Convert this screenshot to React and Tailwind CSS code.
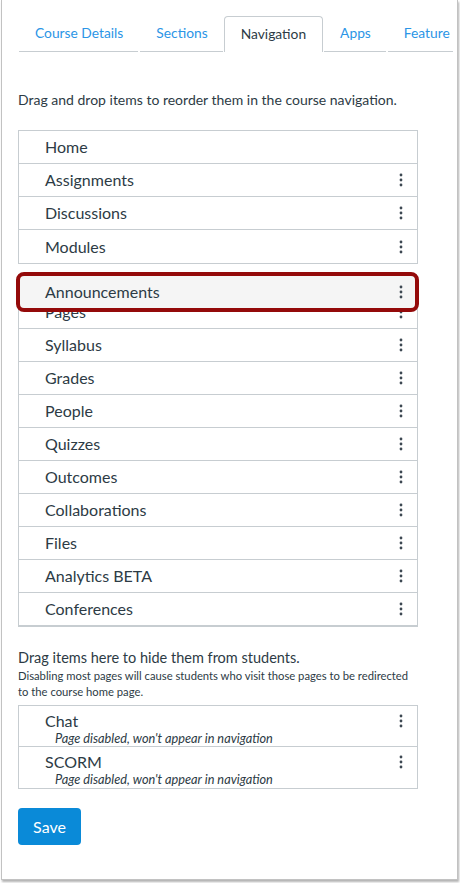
import React from "react";

const tabs = ["Course Details", "Sections", "Navigation", "Apps", "Feature"];

const enabledTop = ["Home", "Assignments", "Discussions", "Modules"];
const enabledRest = [
  "Pages",
  "Syllabus",
  "Grades",
  "People",
  "Quizzes",
  "Outcomes",
  "Collaborations",
  "Files",
  "Analytics BETA",
  "Conferences",
];
const hidden = ["Chat", "SCORM"];

function Kebab() {
  return (
    <svg width="6" height="16" viewBox="0 0 6 16" className="shrink-0">
      <circle cx="3" cy="3" r="1.4" fill="#3d4852" />
      <circle cx="3" cy="8" r="1.4" fill="#3d4852" />
      <circle cx="3" cy="13" r="1.4" fill="#3d4852" />
    </svg>
  );
}

function Row({ label, menu = true }) {
  return (
    <div className="flex items-center justify-between h-[33px] border-b border-[#c7cdd1] last:border-b-0 pl-[26px] pr-[13px]">
      <span className="text-[16px] text-[#2d3b45]">{label}</span>
      {menu && <Kebab />}
    </div>
  );
}

export default function App() {
  return (
    <div className="w-[460px] h-[883px] bg-white" style={{ fontFamily: "Lato, 'Open Sans', sans-serif" }}>
      <div className="ml-[1px] w-[457px] h-[880px] border-x border-b border-[#c2c2c2] shadow-[1px_2px_2px_rgba(0,0,0,0.3)] pl-[16px] pt-[16px]">
        {/* tabs */}
        <div className="flex w-[435px] overflow-hidden">
          {tabs.map((t) =>
            t === "Navigation" ? (
              <div
                key={t}
                className="shrink-0 h-[36px] px-4 flex items-center border border-b-0 border-[#c7cdd1] rounded-t-[4px] text-[13.8px] text-[#2d3b45] bg-white"
              >
                {t}
              </div>
            ) : (
              <div
                key={t}
                className="shrink-0 h-[36px] pl-4 pr-[15px] mx-[1px] flex items-center border-b border-[#c7cdd1] text-[13.8px] text-[#2b95e6] whitespace-nowrap"
              >
                {t}
              </div>
            )
          )}
          <div className="flex-1 border-b border-[#c7cdd1]" />
        </div>

        <p className="mt-[38px] text-[14px] leading-[20px] text-[#2d3b45]">
          Drag and drop items to reorder them in the course navigation.
        </p>

        <div className="mt-[20px] w-[400px] border border-[#c7cdd1]">
          {enabledTop.map((l) => (
            <Row key={l} label={l} menu={l !== "Home"} />
          ))}
        </div>

        <div className="relative mt-[31px] w-[400px] border border-[#c7cdd1]">
          {enabledRest.map((l) => (
            <Row key={l} label={l} />
          ))}
          {/* item being dragged */}
          <div className="absolute left-[-3px] top-[-24px] w-[403px] h-[40px] border-[4px] border-[#940a0a] rounded-[8px] bg-[#f5f5f5] flex items-center justify-between pl-[25px] pr-[11px]">
            <span className="text-[16px] text-[#2d3b45]">Announcements</span>
            <Kebab />
          </div>
        </div>

        <p className="mt-[21px] text-[14.5px] leading-[20px] text-[#2d3b45]">
          Drag items here to hide them from students.
        </p>
        <p className="text-[11.25px] leading-[16px] text-[#2d3b45] w-[400px]">
          Disabling most pages will cause students who visit those pages to be redirected to the course home page.
        </p>

        <div className="mt-[5px] w-[400px] border border-[#c7cdd1]">
          {hidden.map((l) => (
            <div key={l} className="h-[41px] border-b border-[#c7cdd1] last:border-b-0 pl-[26px] pr-[13px] pt-[5px]">
              <div className="flex items-center justify-between h-[20px]">
                <span className="text-[16px] text-[#2d3b45]">{l}</span>
                <Kebab />
              </div>
              <div className="pl-[10px] text-[12.75px] leading-[14px] italic text-[#2d3b45]">
                Page disabled, won't appear in navigation
              </div>
            </div>
          ))}
        </div>

        <button className="mt-[19px] h-[37px] w-[63px] rounded-[4px] bg-[#0a8ad8] text-white text-[16px]">
          Save
        </button>
      </div>
    </div>
  );
}
